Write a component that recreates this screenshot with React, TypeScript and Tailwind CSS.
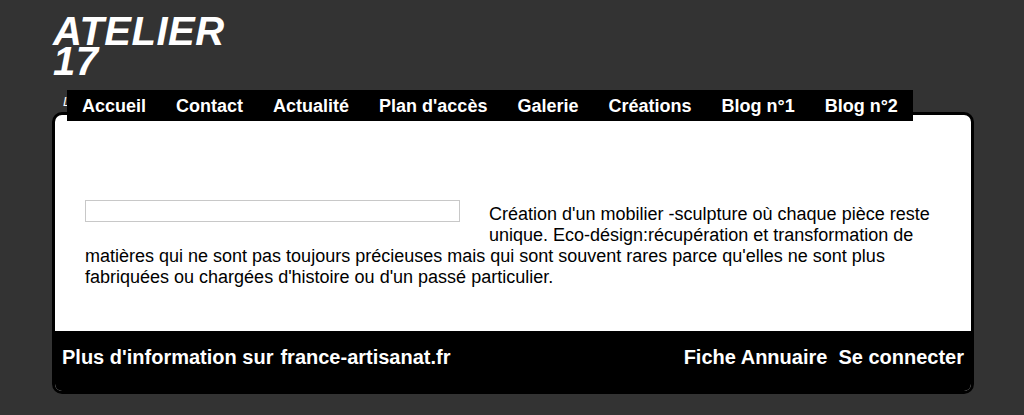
import React from 'react';

const menu = ['Accueil', 'Contact', 'Actualité', "Plan d'accès", 'Galerie', 'Créations', 'Blog n°1', 'Blog n°2'];

export default function App() {
  return (
    <div className="min-h-[415px] bg-[#333333] pt-[16px] font-['Liberation_Sans',Arial,sans-serif]">
      <div className="ml-[52px] w-[922px]">
        <h1 className="pl-[1px] text-[40px] font-bold italic leading-[30px] tracking-[0.5px] text-white">
          ATELIER
          <br />
          17
        </h1>

        <div className="relative mt-[14px]">
          <p className="absolute left-[11px] top-[2px] text-[13px] italic text-white">L'atelier</p>
          <nav className="relative z-10 ml-[15px] flex h-[31px] w-fit bg-black">
            {menu.map((item) => (
              <a key={item} href="#" className="px-[15px] text-[18px] font-bold leading-[32px] text-white">
                {item}
              </a>
            ))}
          </nav>
        </div>

        <div className="-mt-[9px] overflow-hidden rounded-[10px] border-[3px] border-black bg-white">
          <div className="h-[216px] px-[30px] pt-[89px]">
            <div className="text-[18px] leading-[21px] text-black">
              <input
                type="text"
                className="float-left -mt-[4px] mb-[10px] mr-[29px] h-[22px] w-[375px] border border-[#c8c8c8] bg-white"
              />
              Création d'un mobilier -sculpture où chaque pièce reste unique. Eco-désign:récupération et
              transformation de matières qui ne sont pas toujours précieuses mais qui sont souvent rares parce
              qu'elles ne sont plus fabriquées ou chargées d'histoire ou d'un passé particulier.
            </div>
          </div>
          <footer className="flex h-[60px] items-start justify-between bg-black px-[7px] pt-[15px] text-[20px] font-bold leading-[23px] text-white">
            <div className="flex gap-[7px]">
              <span>Plus d'information sur</span>
              <a href="#">france-artisanat.fr</a>
            </div>
            <div className="flex gap-[11px]">
              <a href="#">Fiche Annuaire</a>
              <a href="#">Se connecter</a>
            </div>
          </footer>
        </div>
      </div>
    </div>
  );
}
